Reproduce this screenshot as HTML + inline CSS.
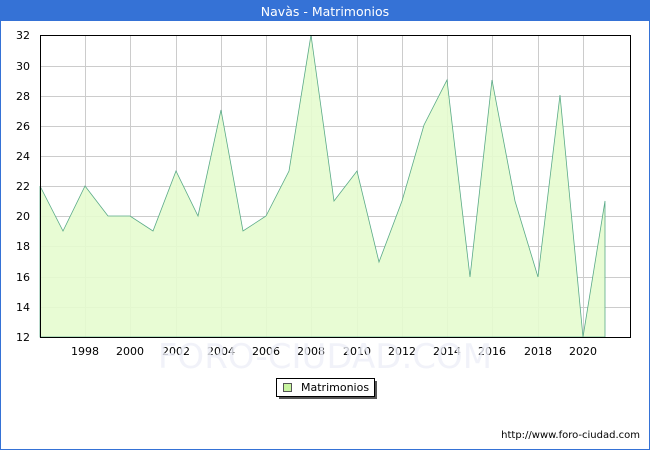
<!DOCTYPE html><html><head><style>body{margin:0;width:650px;height:450px;overflow:hidden;font-family:"DejaVu Sans","Liberation Sans",sans-serif}</style></head><body>
<svg width="650" height="450" xmlns="http://www.w3.org/2000/svg" font-family="DejaVu Sans, Liberation Sans, sans-serif">
<rect x="0.5" y="0.5" width="649" height="449" fill="#fff" stroke="#3572d6"/>
<rect x="0" y="0" width="650" height="21" fill="#3572d6"/>
<text x="325" y="16" fill="#fff" font-size="12.5" text-anchor="middle">Navàs - Matrimonios</text>
<g stroke="#ccc" stroke-width="1">
<line x1="40" y1="66.5" x2="630" y2="66.5"/><line x1="40" y1="96.5" x2="630" y2="96.5"/><line x1="40" y1="126.5" x2="630" y2="126.5"/><line x1="40" y1="156.5" x2="630" y2="156.5"/><line x1="40" y1="186.5" x2="630" y2="186.5"/><line x1="40" y1="216.5" x2="630" y2="216.5"/><line x1="40" y1="246.5" x2="630" y2="246.5"/><line x1="40" y1="277.5" x2="630" y2="277.5"/><line x1="40" y1="307.5" x2="630" y2="307.5"/>
<line x1="85.5" y1="35" x2="85.5" y2="337"/><line x1="130.5" y1="35" x2="130.5" y2="337"/><line x1="176.5" y1="35" x2="176.5" y2="337"/><line x1="221.5" y1="35" x2="221.5" y2="337"/><line x1="266.5" y1="35" x2="266.5" y2="337"/><line x1="311.5" y1="35" x2="311.5" y2="337"/><line x1="357.5" y1="35" x2="357.5" y2="337"/><line x1="402.5" y1="35" x2="402.5" y2="337"/><line x1="447.5" y1="35" x2="447.5" y2="337"/><line x1="492.5" y1="35" x2="492.5" y2="337"/><line x1="538.5" y1="35" x2="538.5" y2="337"/><line x1="583.5" y1="35" x2="583.5" y2="337"/>
</g>
<polygon fill="#e6fccf" fill-opacity="0.9" stroke="#5aaa88" stroke-width="0.8" points="40,337 40,186 63,231 85,186 108,216 130,216 153,231 176,171 198,216 221,110 243,231 266,216 289,171 311,35 334,201 357,171 379,262 402,201 424,125 447,80 470,277 492,80 515,201 538,277 560,95 583,337 605,201 605,337"/>
<rect x="40.5" y="35.5" width="590" height="302" fill="none" stroke="#000"/>
<g font-size="11" fill="#000" text-anchor="end">
<text x="30" y="39">32</text><text x="30" y="70">30</text><text x="30" y="100">28</text><text x="30" y="130">26</text><text x="30" y="160">24</text><text x="30" y="190">22</text><text x="30" y="220">20</text><text x="30" y="250">18</text><text x="30" y="281">16</text><text x="30" y="311">14</text><text x="30" y="341">12</text>
</g>
<g font-size="11" fill="#000" text-anchor="middle">
<text x="85" y="355">1998</text><text x="130" y="355">2000</text><text x="176" y="355">2002</text><text x="221" y="355">2004</text><text x="266" y="355">2006</text><text x="311" y="355">2008</text><text x="357" y="355">2010</text><text x="402" y="355">2012</text><text x="447" y="355">2014</text><text x="492" y="355">2016</text><text x="538" y="355">2018</text><text x="583" y="355">2020</text>
</g>
<text x="325" y="368" font-size="34" fill="#eef0f8" text-anchor="middle" opacity="0.8">FORO-CIUDAD.COM</text>
<rect x="279" y="381" width="98" height="18" fill="#555"/>
<rect x="276.5" y="378.5" width="98" height="18" fill="#fff" stroke="#000"/>
<rect x="283.5" y="383.5" width="8" height="8" fill="#c8f5a0" stroke="#555"/>
<text x="301" y="391" font-size="11">Matrimonios</text>
<text x="640" y="438" font-size="10" text-anchor="end">http://www.foro-ciudad.com</text>
</svg>
</body></html>
